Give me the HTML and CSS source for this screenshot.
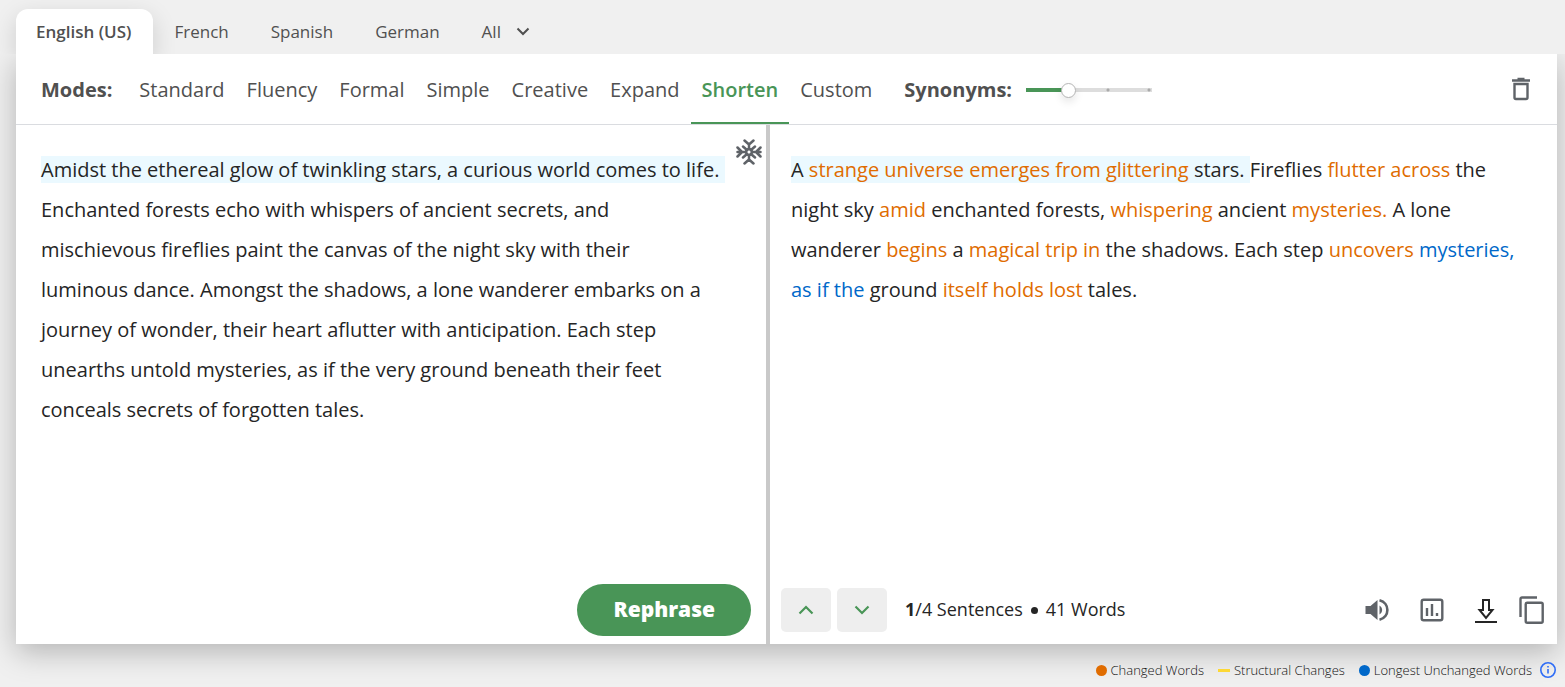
FILE: index.html
```html
<!DOCTYPE html>
<html lang="en">
<head>
<meta charset="utf-8">
<meta name="viewport" content="width=device-width, initial-scale=1">
<title>Paraphraser</title>
<link rel="stylesheet" href="styles.css">
</head>
<body>
<nav class="languages" aria-label="Language">
  <button class="language language-active" type="button">English (US)</button>
  <button class="language" type="button">French</button>
  <button class="language" type="button">Spanish</button>
  <button class="language" type="button">German</button>
  <button class="language language-all" type="button">All
    <svg class="caret" viewBox="0 0 14 14" aria-hidden="true"><path d="M1.500 4.500L7 10l5.500-5.500" fill="none" stroke="currentColor" stroke-width="2"/></svg>
  </button>
</nav>
<main class="panel">
  <div class="toolbar">
    <span class="toolbar-label">Modes:</span>
    <div class="modes">
      <button class="mode" type="button">Standard</button>
      <button class="mode" type="button">Fluency</button>
      <button class="mode" type="button">Formal</button>
      <button class="mode" type="button">Simple</button>
      <button class="mode" type="button">Creative</button>
      <button class="mode" type="button">Expand</button>
      <button class="mode mode-active" type="button">Shorten</button>
      <button class="mode" type="button">Custom</button>
    </div>
    <label class="toolbar-label synonyms-label" for="synonyms">Synonyms:</label>
    <input class="synonyms" id="synonyms" type="range" min="0" max="3" value="1">
    <button class="icon-button trash" type="button" aria-label="Delete text">
      <svg width="20" height="24" viewBox="0 0 20 24"><path d="M1 3.500h18M6.500 2h7" fill="none" stroke="currentColor" stroke-width="2.400"/><path d="M3.500 7h13v13.500a1.500 1.500 0 0 1-1.500 1.500H5a1.500 1.500 0 0 1-1.500-1.500z" fill="none" stroke="currentColor" stroke-width="2.400"/></svg>
    </button>
  </div>
  <div class="panes">
    <section class="pane pane-source">
      <div class="source-row">
        <p class="text source-text"><mark class="sentence">Amidst the ethereal glow of twinkling stars, a curious world comes to life. </mark>Enchanted forests echo with whispers of ancient secrets, and mischievous fireflies paint the canvas of the night sky with their luminous dance. Amongst the shadows, a lone wanderer embarks on a journey of wonder, their heart aflutter with anticipation. Each step unearths untold mysteries, as if the very ground beneath their feet conceals secrets of forgotten tales.</p>
        <button class="icon-button freeze" type="button" aria-label="Freeze words">
          <svg width="26" height="26" viewBox="-13 -13 26 26" fill="none" stroke="currentColor" stroke-width="2.500" stroke-linecap="round" stroke-linejoin="round">
            <circle r="2.900"/>
            <path d="M0-3v-4.500M-4.500-11.500L0-7.500l4.500-4M0 3v4.500M-4.500 11.500L0 7.500l4.500 4M-3 0h-8.500M-11.500-4.500L-7 0l-4.500 4.500M3 0h8.500M11.500-4.500L7 0l4.500 4.500M-2-2l-4-3.500M2-2l4-3.500M-2 2l-4 3.500M2 2l4 3.500"/>
          </svg>
        </button>
      </div>
      <div class="source-actions">
        <button class="rephrase" type="button">Rephrase</button>
      </div>
    </section>
    <section class="pane pane-result">
      <p class="text result-text"><mark class="sentence">A <span class="changed">strange universe emerges from glittering</span> stars. </mark>Fireflies <span class="changed">flutter across</span> the night sky <span class="changed">amid</span> enchanted forests, <span class="changed">whispering</span> ancient <span class="changed">mysteries.</span> A lone wanderer <span class="changed">begins</span> a <span class="changed">magical trip in</span> the shadows. Each step <span class="changed">uncovers</span> <span class="unchanged">mysteries, as if the</span> ground <span class="changed">itself holds lost</span> tales.</p>
      <div class="result-actions">
        <button class="step" type="button" aria-label="Previous sentence"><svg width="16" height="10" viewBox="0 0 16 10"><path d="M1.500 8.500L8 2l6.500 6.500" fill="none" stroke="currentColor" stroke-width="2.200"/></svg></button>
        <button class="step" type="button" aria-label="Next sentence"><svg width="16" height="10" viewBox="0 0 16 10"><path d="M1.500 1.500L8 8l6.500-6.500" fill="none" stroke="currentColor" stroke-width="2.200"/></svg></button>
        <p class="counts"><span><b>1</b>/4 Sentences</span><i class="counts-dot"></i><span>41 Words</span></p>
        <div class="tools">
          <button class="icon-button" type="button" aria-label="Read aloud"><svg width="24" height="24" viewBox="0 0 24 24"><path d="M.5 8v8h5l7 6V2l-7 6z" fill="currentColor"/><path d="M14.500 7.500c3.500 2 3.500 7 0 9z" fill="currentColor"/><path d="M14.500 2.300c10.500 2.700 10.500 16.700 0 19.400" fill="none" stroke="currentColor" stroke-width="2.600"/></svg></button>
          <button class="icon-button" type="button" aria-label="Statistics"><svg width="24" height="24" viewBox="0 0 24 24" fill="none" stroke="currentColor" stroke-width="2.400"><rect x="1.700" y="1.700" width="20.600" height="20.600" rx="2"/><path d="M7 10v8M12 6v12M17 15v3"/></svg></button>
          <button class="icon-button download" type="button" aria-label="Download"><svg width="22" height="26" viewBox="0 0 22 26" fill="none" stroke="currentColor" stroke-width="2"><path d="M8 3h6v10h3.500L11 21l-6.500-8H8z"/><path d="M0 25h22"/></svg></button>
          <button class="icon-button copy" type="button" aria-label="Copy"><svg width="25" height="28" viewBox="0 0 25 28" fill="none" stroke="currentColor" stroke-width="2.400"><path d="M18 1.500H3A1.500 1.500 0 0 0 1.500 3v18"/><rect x="6.700" y="6.700" width="17" height="20" rx="1.500"/></svg></button>
        </div>
      </div>
    </section>
  </div>
</main>
<footer class="legend">
  <span class="legend-item"><i class="dot dot-changed"></i>Changed Words</span>
  <span class="legend-item"><i class="dash"></i>Structural Changes</span>
  <span class="legend-item"><i class="dot dot-unchanged"></i>Longest Unchanged Words</span>
  <button class="icon-button info" type="button" aria-label="About the colours"><svg width="16" height="16" viewBox="0 0 16 16"><circle cx="8" cy="8" r="7.200" fill="none" stroke="currentColor" stroke-width="1.600"/><path d="M8 7v4.500M8 4v1.500" stroke="currentColor" stroke-width="1.600"/></svg></button>
</footer>
</body>
</html>
```
FILE: styles.css
```css
* {
  box-sizing: border-box;
}

body {
  display: flex;
  flex-direction: column;
  min-height: 100vh;
  margin: 0;
  background: #f0f0f0;
  color: #252525;
  font-family: "Open Sans", "Noto Sans", sans-serif;
}

button {
  padding: 0;
  border: 0;
  background: none;
  color: inherit;
  font: inherit;
  cursor: pointer;
}

svg {
  display: block;
}

p {
  margin: 0;
}

.languages {
  position: relative;
  z-index: 1;
  display: flex;
  padding: 9px 16px 0;
  overflow: hidden;
  background: #f0f0f0;
  color: #505050;
  font-size: 17px;
}

.language {
  height: 45px;
  padding: 0 21px 1px;
}

.language-active {
  padding: 0 22px 1px 20px;
  border-radius: 12px 12px 0 0;
  background: #fff;
  box-shadow: 0 8px 24px rgba(0, 0, 0, 0.15);
  font-weight: 600;
}

.language-all {
  display: flex;
  align-items: center;
  gap: 15px;
}

.caret {
  width: 14px;
  height: 14px;
}

.panel {
  display: flex;
  flex: 1;
  flex-direction: column;
  margin: 0 8px 0 16px;
  background: #fff;
  box-shadow: 0 8px 28px rgba(0, 0, 0, 0.25);
}

.toolbar {
  display: flex;
  align-items: center;
  height: 71px;
  padding: 0 24px 0 25px;
  border-bottom: 1px solid #dadce0;
  color: #505050;
  font-size: 20px;
}

.toolbar-label {
  font-weight: 700;
}

.modes {
  display: flex;
  align-self: stretch;
  margin-left: 16px;
}

.mode {
  padding: 0 11px;
  border-top: 2px solid transparent;
  border-bottom: 2px solid transparent;
}

.mode-active {
  border-bottom-color: #499557;
  color: #499557;
  font-weight: 600;
}

.synonyms-label {
  margin-left: 21px;
}

.synonyms {
  width: 136px;
  height: 16px;
  margin: 2px -5px 0 9px;
  appearance: none;
  background:
    radial-gradient(circle at 87px 8px, #aaa 1px, transparent 2px),
    radial-gradient(circle at 128px 8px, #aaa 1px, transparent 2px),
    linear-gradient(90deg, #499557 40px, #ddd 40px) center / 126px 4px no-repeat;
}

.synonyms::-webkit-slider-thumb {
  width: 15px;
  height: 15px;
  appearance: none;
  border: 1px solid #b5b5b5;
  border-radius: 50%;
  background: #fff;
  box-shadow: 0 4px 8px rgba(0, 0, 0, 0.1);
}

.icon-button {
  color: #5f6368;
}

.trash {
  margin-left: auto;
  margin-right: 2px;
}

.panes {
  display: flex;
  flex: 1;
}

.pane {
  display: flex;
  flex-direction: column;
  justify-content: space-between;
  min-width: 0;
}

.pane-source {
  flex: 750;
  border-right: 4px solid #c9c9c9;
}

.pane-result {
  flex: 787;
}

.text {
  font-size: 20px;
  line-height: 40px;
  white-space: pre-wrap;
}

.source-row {
  display: flex;
  align-items: flex-start;
  gap: 15px;
  padding: 14px 4px 0 25px;
}

.source-text {
  flex: 1;
  padding-top: 11px;
}

.result-text {
  padding: 25px 24px 0 21px;
}

.sentence {
  background: #ebf9ff;
  color: inherit;
}

.changed {
  color: #e06c00;
}

.unchanged {
  color: #0068c9;
}

.source-actions {
  display: flex;
  justify-content: flex-end;
  padding: 0 15px 8px;
}

.rephrase {
  height: 52px;
  padding: 0 36px 3px;
  border-radius: 26px;
  background: #499557;
  color: #fff;
  font-size: 21px;
  font-weight: 800;
}

.result-actions {
  display: flex;
  align-items: center;
  gap: 6px;
  padding: 0 13px 12px 11px;
}

.step {
  display: grid;
  place-items: center;
  width: 50px;
  height: 44px;
  border-radius: 5px;
  background: #eee;
  color: #499557;
}

.counts {
  display: flex;
  align-items: center;
  gap: 8px;
  margin-left: 12px;
  padding-bottom: 2px;
  font-size: 18px;
  font-weight: 500;
}

.counts-dot {
  width: 7px;
  height: 7px;
  margin-top: 3px;
  border-radius: 50%;
  background: currentColor;
}

.tools {
  display: flex;
  align-items: center;
  gap: 31px;
  margin-left: auto;
}

.download {
  color: #252525;
}

.copy {
  margin-left: -9px;
}

.legend {
  position: relative;
  display: flex;
  align-items: center;
  justify-content: flex-end;
  gap: 14px;
  height: 43px;
  padding: 9px 9px 0;
  color: #111;
  font-size: 13px;
  font-weight: 300;
}

.legend-item {
  display: flex;
  align-items: center;
  gap: 4px;
}

.dot {
  width: 11px;
  height: 11px;
  border-radius: 50%;
}

.dot-changed {
  background: #e06c00;
}

.dot-unchanged {
  background: #0068c9;
}

.dash {
  width: 12px;
  height: 3px;
  background: #fdd835;
}

.info {
  margin-left: -6px;
  color: #2f6df6;
}
```
